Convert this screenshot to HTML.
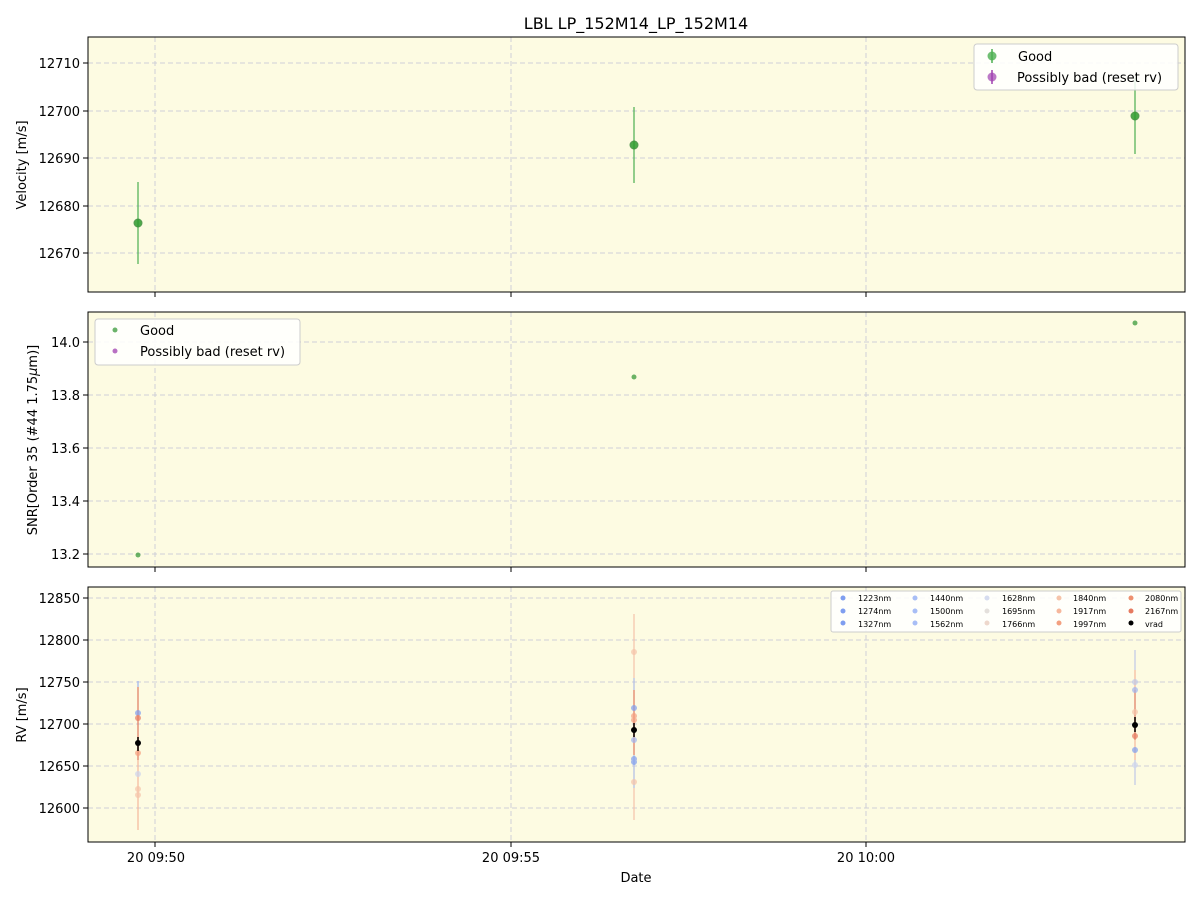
<!DOCTYPE html>
<html><head><meta charset="utf-8"><style>body{margin:0;background:#fff}svg{display:block;font-family:"DejaVu Sans","Liberation Sans",sans-serif}</style></head><body>
<svg width="1200" height="900" xmlns="http://www.w3.org/2000/svg">
<rect width="1200" height="900" fill="#fff"/>
<text x="636" y="29" font-size="16" text-anchor="middle">LBL LP_152M14_LP_152M14</text>
<g stroke="#ccc" stroke-dasharray="5,4" stroke-width="0.8">
</g>
<!-- Panel 1 -->
<rect x="88" y="37" width="1097" height="255" fill="#fdfbe2"/>
<g stroke="#cfcfd8" stroke-dasharray="5,3" stroke-width="1">
<line x1="88" x2="1185" y1="63" y2="63"/><line x1="88" x2="1185" y1="111" y2="111"/><line x1="88" x2="1185" y1="158" y2="158"/><line x1="88" x2="1185" y1="206" y2="206"/><line x1="88" x2="1185" y1="253" y2="253"/>
<line x1="155" x2="155" y1="37" y2="292"/><line x1="511" x2="511" y1="37" y2="292"/><line x1="866" x2="866" y1="37" y2="292"/>
</g>
<g stroke="#4caf50" stroke-width="1.5" opacity="0.8">
<line x1="138" x2="138" y1="182" y2="264"/><line x1="634" x2="634" y1="107" y2="183"/><line x1="1135" x2="1135" y1="78" y2="154"/>
</g>
<g fill="#2e9b2e" stroke="#3a8a3a" opacity="0.85"><circle cx="138" cy="223" r="4"/><circle cx="634" cy="145" r="4"/><circle cx="1135" cy="116" r="4"/></g>
<rect x="88" y="37" width="1097" height="255" fill="none" stroke="#000" stroke-width="1"/>
<g font-size="13" text-anchor="end">
<text x="80" y="68">12710</text><text x="80" y="116">12700</text><text x="80" y="163">12690</text><text x="80" y="211">12680</text><text x="80" y="258">12670</text></g>
<g stroke="#000"><line x1="83" x2="88" y1="63" y2="63"/><line x1="83" x2="88" y1="111" y2="111"/><line x1="83" x2="88" y1="158" y2="158"/><line x1="83" x2="88" y1="206" y2="206"/><line x1="83" x2="88" y1="253" y2="253"/>
<line x1="155" x2="155" y1="292" y2="297"/><line x1="511" x2="511" y1="292" y2="297"/><line x1="866" x2="866" y1="292" y2="297"/></g>
<text transform="translate(26,165) rotate(-90)" font-size="13" text-anchor="middle">Velocity [m/s]</text>
<rect x="974" y="44" width="204" height="46" rx="3" fill="#fff" fill-opacity="0.85" stroke="#ccc"/>
<line x1="992" x2="992" y1="49" y2="63" stroke="#4caf50" stroke-width="1.5"/><circle cx="992" cy="56" r="4.5" fill="#4caf50" opacity="0.8"/>
<line x1="992" x2="992" y1="70" y2="84" stroke="#a040b0" stroke-width="1.5"/><circle cx="992" cy="77" r="4.5" fill="#a040b0" opacity="0.7"/>
<text x="1018" y="61" font-size="13">Good</text><text x="1017" y="82" font-size="13">Possibly bad (reset rv)</text>
<!-- Panel 2 -->
<rect x="88" y="312" width="1097" height="255" fill="#fdfbe2"/>
<g stroke="#cfcfd8" stroke-dasharray="5,3" stroke-width="1">
<line x1="88" x2="1185" y1="342" y2="342"/><line x1="88" x2="1185" y1="395" y2="395"/><line x1="88" x2="1185" y1="448" y2="448"/><line x1="88" x2="1185" y1="501" y2="501"/><line x1="88" x2="1185" y1="554" y2="554"/>
<line x1="155" x2="155" y1="312" y2="567"/><line x1="511" x2="511" y1="312" y2="567"/><line x1="866" x2="866" y1="312" y2="567"/>
</g>
<g fill="#3a9a3a" opacity="0.75"><circle cx="138" cy="555" r="2.5"/><circle cx="634" cy="377" r="2.5"/><circle cx="1135" cy="323" r="2.5"/></g>
<rect x="88" y="312" width="1097" height="255" fill="none" stroke="#000"/>
<g font-size="13" text-anchor="end"><text x="80" y="347">14.0</text><text x="80" y="400">13.8</text><text x="80" y="453">13.6</text><text x="80" y="506">13.4</text><text x="80" y="559">13.2</text></g>
<g stroke="#000"><line x1="83" x2="88" y1="342" y2="342"/><line x1="83" x2="88" y1="395" y2="395"/><line x1="83" x2="88" y1="448" y2="448"/><line x1="83" x2="88" y1="501" y2="501"/><line x1="83" x2="88" y1="554" y2="554"/>
<line x1="155" x2="155" y1="567" y2="572"/><line x1="511" x2="511" y1="567" y2="572"/><line x1="866" x2="866" y1="567" y2="572"/></g>
<text transform="translate(37,440) rotate(-90)" font-size="13" text-anchor="middle">SNR[Order 35 (#44 1.75<tspan font-style="italic">μ</tspan>m)]</text>
<rect x="95" y="319" width="205" height="46" rx="3" fill="#fff" fill-opacity="0.85" stroke="#ccc"/>
<circle cx="115" cy="330" r="2.5" fill="#3a9a3a" opacity="0.75"/><circle cx="115" cy="351" r="2.5" fill="#a040b0" opacity="0.75"/>
<text x="140" y="335" font-size="13">Good</text><text x="140" y="356" font-size="13">Possibly bad (reset rv)</text>
<!-- Panel 3 -->
<rect x="88" y="587" width="1097" height="255" fill="#fdfbe2"/>
<g stroke="#cfcfd8" stroke-dasharray="5,3" stroke-width="1">
<line x1="88" x2="1185" y1="598" y2="598"/><line x1="88" x2="1185" y1="640" y2="640"/><line x1="88" x2="1185" y1="682" y2="682"/><line x1="88" x2="1185" y1="724" y2="724"/><line x1="88" x2="1185" y1="766" y2="766"/><line x1="88" x2="1185" y1="808" y2="808"/>
<line x1="155" x2="155" y1="587" y2="842"/><line x1="511" x2="511" y1="587" y2="842"/><line x1="866" x2="866" y1="587" y2="842"/>
</g>
<g stroke-width="2" opacity="0.6">
<line x1="138" x2="138" y1="681" y2="830" stroke="#f6b79c"/><line x1="138" x2="138" y1="681" y2="745" stroke="#9db4f0"/><line x1="138" x2="138" y1="687" y2="760" stroke="#e07a60"/>
<line x1="634" x2="634" y1="614" y2="820" stroke="#f6c4aa"/><line x1="634" x2="634" y1="678" y2="788" stroke="#b0bce6"/><line x1="634" x2="634" y1="690" y2="755" stroke="#e07a60"/>
<line x1="1135" x2="1135" y1="650" y2="785" stroke="#c0c8e8"/><line x1="1135" x2="1135" y1="670" y2="760" stroke="#f6b79c"/><line x1="1135" x2="1135" y1="690" y2="740" stroke="#e07a60"/>
</g>
<g opacity="0.7">
<circle cx="138" cy="713" r="3" fill="#7f9ef0"/><circle cx="138" cy="718" r="3" fill="#e87a60"/><circle cx="138" cy="753" r="3" fill="#f6a080"/><circle cx="138" cy="774" r="3" fill="#cdd4ee"/><circle cx="138" cy="789" r="3" fill="#f6c4aa"/><circle cx="138" cy="795" r="3" fill="#f6c4aa"/>
<circle cx="634" cy="708" r="3" fill="#7f9ef0"/><circle cx="634" cy="716" r="3" fill="#f6a080"/><circle cx="634" cy="720" r="3" fill="#f6a080"/><circle cx="634" cy="740" r="3" fill="#a0b4f0"/><circle cx="634" cy="759" r="3" fill="#7f9ef0"/><circle cx="634" cy="762" r="3" fill="#7f9ef0"/><circle cx="634" cy="652" r="3" fill="#f6c4aa"/><circle cx="634" cy="782" r="3" fill="#f6c4aa"/>
<circle cx="1135" cy="682" r="3" fill="#c0c8e8"/><circle cx="1135" cy="690" r="3" fill="#a0b4f0"/><circle cx="1135" cy="712" r="3" fill="#f6c4aa"/><circle cx="1135" cy="736" r="3" fill="#e87a60"/><circle cx="1135" cy="750" r="3" fill="#7f9ef0"/><circle cx="1135" cy="765" r="3" fill="#cdd4ee"/>
</g>
<g stroke="#000" stroke-width="1.5"><line x1="138" x2="138" y1="737" y2="751"/><line x1="634" x2="634" y1="723" y2="737"/><line x1="1135" x2="1135" y1="717" y2="732"/></g>
<g fill="#000"><circle cx="138" cy="743" r="3"/><circle cx="634" cy="730" r="3"/><circle cx="1135" cy="725" r="3"/></g>
<rect x="88" y="587" width="1097" height="255" fill="none" stroke="#000"/>
<g font-size="13" text-anchor="end"><text x="80" y="603">12850</text><text x="80" y="645">12800</text><text x="80" y="687">12750</text><text x="80" y="729">12700</text><text x="80" y="771">12650</text><text x="80" y="813">12600</text></g>
<g stroke="#000"><line x1="83" x2="88" y1="598" y2="598"/><line x1="83" x2="88" y1="640" y2="640"/><line x1="83" x2="88" y1="682" y2="682"/><line x1="83" x2="88" y1="724" y2="724"/><line x1="83" x2="88" y1="766" y2="766"/><line x1="83" x2="88" y1="808" y2="808"/>
<line x1="155" x2="155" y1="842" y2="847"/><line x1="511" x2="511" y1="842" y2="847"/><line x1="866" x2="866" y1="842" y2="847"/></g>
<text transform="translate(26,715) rotate(-90)" font-size="13" text-anchor="middle">RV [m/s]</text>
<g font-size="13" text-anchor="middle"><text x="156" y="862">20 09:50</text><text x="511" y="862">20 09:55</text><text x="866" y="862">20 10:00</text></g>
<text x="636" y="882" font-size="13" text-anchor="middle">Date</text>
<rect x="831" y="591" width="350" height="41" rx="2" fill="#fff" fill-opacity="0.85" stroke="#ccc"/>
<g font-size="8">
<g fill="#7f9ef0"><circle cx="843" cy="598" r="2.5"/><circle cx="843" cy="611" r="2.5"/><circle cx="843" cy="623" r="2.5"/></g>
<g fill="#a8bef6"><circle cx="915" cy="598" r="2.5"/><circle cx="915" cy="611" r="2.5"/><circle cx="915" cy="623" r="2.5"/></g>
<g fill="#d6dcef"><circle cx="987" cy="598" r="2.5"/><circle cx="987" cy="611" r="2.5" fill="#e4e0dc"/><circle cx="987" cy="623" r="2.5" fill="#eed8cc"/></g>
<g fill="#f6c4aa"><circle cx="1059" cy="598" r="2.5"/><circle cx="1059" cy="611" r="2.5" fill="#f6b79c"/><circle cx="1059" cy="623" r="2.5" fill="#f3a080"/></g>
<g fill="#ee9070"><circle cx="1131" cy="598" r="2.5"/><circle cx="1131" cy="611" r="2.5" fill="#e67a60"/><circle cx="1131" cy="623" r="2.5" fill="#000"/></g>
<text x="858" y="601">1223nm</text><text x="858" y="614">1274nm</text><text x="858" y="627">1327nm</text>
<text x="930" y="601">1440nm</text><text x="930" y="614">1500nm</text><text x="930" y="627">1562nm</text>
<text x="1002" y="601">1628nm</text><text x="1002" y="614">1695nm</text><text x="1002" y="627">1766nm</text>
<text x="1073" y="601">1840nm</text><text x="1073" y="614">1917nm</text><text x="1073" y="627">1997nm</text>
<text x="1145" y="601">2080nm</text><text x="1145" y="614">2167nm</text><text x="1145" y="627">vrad</text>
</g>
</svg>
</body></html>
